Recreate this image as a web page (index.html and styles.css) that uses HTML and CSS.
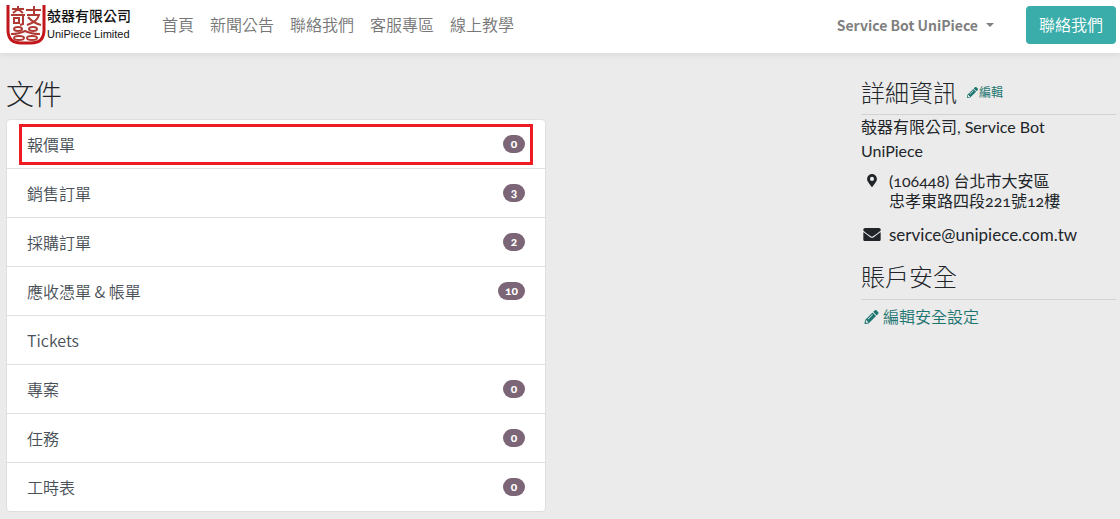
FILE: index.html
```html
<!DOCTYPE html>
<html lang="zh-Hant">
<head>
  <meta charset="UTF-8">
  <meta name="viewport" content="width=device-width, initial-scale=1.0">
  <title>文件</title>
  <link rel="stylesheet" href="styles.css">
</head>
<body>
  <!-- Icons shared by the page -->
  <svg class="sprite" aria-hidden="true">
    <symbol id="icon-pencil" viewBox="0 0 512 512">
      <path fill="currentColor" d="M498 142l-46 46c-5 5-13 5-17 0L324 77c-5-5-5-12 0-17l46-46c19-19 49-19 68 0l60 60c19 19 19 49 0 68zm-214-42L22 362 0 484c-3 16 12 30 28 28l122-22 262-262c5-5 5-13 0-17L301 100c-4-5-12-5-17 0zM124 340c-5-6-5-14 0-20l154-154c6-5 14-5 20 0s5 14 0 20L144 340c-6 5-14 5-20 0zm-36 84h48v36l-64 12-32-31 12-65h36v48z"/>
    </symbol>
    <symbol id="icon-pin" viewBox="0 0 384 512">
      <path fill="currentColor" d="M172 502C27 291 0 270 0 192 0 86 86 0 192 0s192 86 192 192c0 78-27 99-172 310-9 13-29 13-40 0zM192 272a80 80 0 1 0 0-160 80 80 0 0 0 0 160z"/>
    </symbol>
    <symbol id="icon-mail" viewBox="0 64 512 384">
      <path fill="currentColor" d="M502 191c4-3 10 0 10 5v204c0 27-22 48-48 48H48c-26 0-48-21-48-48V196c0-5 6-8 10-5 22 17 52 40 155 114 21 15 56 48 91 48 35 0 71-34 91-48 103-75 133-97 155-114zM256 320c23 0 57-30 74-42 133-97 143-105 173-129 6-4 9-11 9-18v-19c0-26-22-48-48-48H48C22 64 0 86 0 112v19c0 7 3 14 9 18 30 24 40 32 173 129 17 12 51 42 74 42z"/>
    </symbol>
  </svg>

  <header class="navbar">
    <a class="brand" href="#">
      <svg class="brand-mark" viewBox="0 0 40 40" aria-hidden="true">
        <path class="mark-frame" d="M2 0v25q0 13 13 13h10q13 0 13-13V0"/>
        <g class="mark-lines">
          <path d="M6 4h12M12 1v3l-5 4M12 4l5 4M5 10h14M8 13h5v5H8zM17 10v9l-3 1"/>
          <path d="M20 5h15M28 1v9M21 10h12q-2 7-12 10M22 12q5 6 13 8"/>
          <ellipse cx="12" cy="24" rx="4" ry="2"/>
          <ellipse cx="27" cy="24" rx="4" ry="2"/>
          <path d="M5 29q8 0 14-3 6 3 15 3"/>
          <ellipse cx="13" cy="33" rx="5" ry="2"/>
          <ellipse cx="26" cy="33" rx="5" ry="2"/>
        </g>
      </svg>
      <span class="brand-text">
        <span class="brand-zh">攲器有限公司</span>
        <span class="brand-en">UniPiece Limited</span>
      </span>
    </a>
    <nav class="nav">
      <a href="#">首頁</a>
      <a href="#">新聞公告</a>
      <a href="#">聯絡我們</a>
      <a href="#">客服專區</a>
      <a href="#">線上教學</a>
    </nav>
    <button class="user-menu" type="button">Service Bot UniPiece</button>
    <a class="btn" href="#">聯絡我們</a>
  </header>

  <main class="portal">
    <section class="docs">
      <h1>文件</h1>
      <div class="list">
        <a class="item marked" href="#">報價單<span class="badge">0</span></a>
        <a class="item" href="#">銷售訂單<span class="badge">3</span></a>
        <a class="item" href="#">採購訂單<span class="badge">2</span></a>
        <a class="item" href="#">應收憑單 &amp; 帳單<span class="badge">10</span></a>
        <a class="item" href="#">Tickets</a>
        <a class="item" href="#">專案<span class="badge">0</span></a>
        <a class="item" href="#">任務<span class="badge">0</span></a>
        <a class="item" href="#">工時表<span class="badge">0</span></a>
      </div>
    </section>

    <aside class="side">
      <section class="details">
        <h2>詳細資訊
          <a class="edit" href="#"><svg class="icon"><use href="#icon-pencil"/></svg>編輯</a>
        </h2>
        <p class="name">攲器有限公司, Service Bot UniPiece</p>
        <div class="contact">
          <svg class="icon"><use href="#icon-pin"/></svg>
          <address>(106448) 台北市大安區<br>忠孝東路四段221號12樓</address>
        </div>
        <div class="contact">
          <svg class="icon"><use href="#icon-mail"/></svg>
          <span class="email">service@unipiece.com.tw</span>
        </div>
      </section>
      <section class="security">
        <h2>賬戶安全</h2>
        <a class="edit-security" href="#"><svg class="icon"><use href="#icon-pencil"/></svg>編輯安全設定</a>
      </section>
    </aside>
  </main>
</body>
</html>
```
FILE: styles.css
```css
* {
  box-sizing: border-box;
}

body {
  margin: 0;
  background: #ebebeb;
  color: #212529;
  font-family: Lato, "Noto Sans CJK TC", sans-serif;
  font-size: 16px;
  font-weight: 350;
  font-variant-numeric: oldstyle-nums;
  line-height: 24px;
}

a {
  color: #1d7570;
  text-decoration: none;
}

h1,
h2 {
  margin: 0;
  font-weight: 300;
}

.sprite {
  display: none;
}

.icon {
  width: 16px;
  height: 14px;
}

/* Top bar */
.navbar {
  display: flex;
  align-items: center;
  height: 53px;
  padding: 0 4px 3px 6px;
  background: #fff;
  box-shadow: 0 2px 6px rgba(0, 0, 0, 0.08);
}

.brand {
  display: flex;
  align-items: center;
  gap: 1px;
  color: #111;
}

.brand-mark {
  width: 40px;
  height: 40px;
  fill: none;
}

.mark-frame {
  stroke: #c3161c;
  stroke-width: 3;
}

.mark-lines {
  stroke: #b03a34;
  stroke-width: 2;
}

.brand-text {
  display: flex;
  flex-direction: column;
}

.brand-zh {
  font-size: 14px;
  font-weight: 500;
  line-height: 18px;
}

.brand-en {
  font-family: "Liberation Sans", sans-serif;
  font-size: 11px;
  font-weight: 400;
  line-height: 18px;
}

.nav {
  display: flex;
  gap: 16px;
  margin-left: 31px;
}

.nav a {
  color: #777;
}

.user-menu {
  display: flex;
  align-items: center;
  gap: 8px;
  margin-left: auto;
  padding: 0;
  border: 0;
  background: none;
  color: #7f7f7f;
  font: bold 14px/24px "Noto Sans CJK TC", sans-serif;
}

.user-menu::after {
  content: "";
  border: 4px solid transparent;
  border-top-color: currentColor;
  border-bottom: 0;
}

.btn {
  margin-left: 32px;
  padding: 7px 13px;
  border-radius: 4px;
  background: #3aadaa;
  color: #fff;
}

/* Page body */
.portal {
  display: grid;
  grid-template-columns: repeat(12, 1fr);
  column-gap: 30px;
  padding: 24px 4px 7px 6px;
}

.docs {
  grid-column: span 6;
}

.docs h1 {
  padding-bottom: 8px;
  font-size: 28px;
  line-height: 34px;
}

.list {
  border: 1px solid #dfdfdf;
  border-radius: 4px;
  background: #fff;
}

.item {
  position: relative;
  display: flex;
  align-items: center;
  justify-content: space-between;
  padding: 12px 20px;
  color: #495057;
  font-family: "Noto Sans CJK TC", sans-serif;
}

.item + .item {
  border-top: 1px solid #dfdfdf;
}

.marked::after {
  content: "";
  position: absolute;
  inset: 4px 12px 3px;
  border: 3px solid #ed1c24;
}

.badge {
  min-width: 22px;
  padding: 0 7px;
  border-radius: 9px;
  background: #7c6576;
  color: #fff;
  font-family: Lato, sans-serif;
  font-size: 12px;
  font-weight: 900;
  line-height: 18px;
  text-align: center;
}

.side {
  grid-column: 10 / span 3;
}

.side h2 {
  display: flex;
  align-items: center;
  gap: 10px;
  padding-bottom: 6px;
  border-bottom: 1px solid #d2d2d2;
  font-size: 24px;
  line-height: 31px;
}

.edit {
  display: flex;
  align-items: center;
  gap: 1px;
  font-size: 12px;
  font-weight: 400;
}

.edit .icon {
  width: 11px;
  height: 11px;
}

.name {
  margin: 0 40px 8px 0;
  font-weight: 400;
}

.contact {
  display: flex;
  gap: 8px;
  margin-bottom: 14px;
  padding-left: 2px;
  font-weight: 400;
  line-height: 20px;
}

.contact .icon {
  flex: none;
  width: 18px;
  height: 13px;
  margin-top: 3px;
}

.contact address {
  font-style: normal;
}

.email {
  font-size: 17px;
}

.security h2 {
  padding: 2px 0 7px;
}

.edit-security {
  display: flex;
  align-items: center;
  gap: 4px;
  padding: 5px 3px;
}

.edit-security .icon {
  width: 15px;
}
```
